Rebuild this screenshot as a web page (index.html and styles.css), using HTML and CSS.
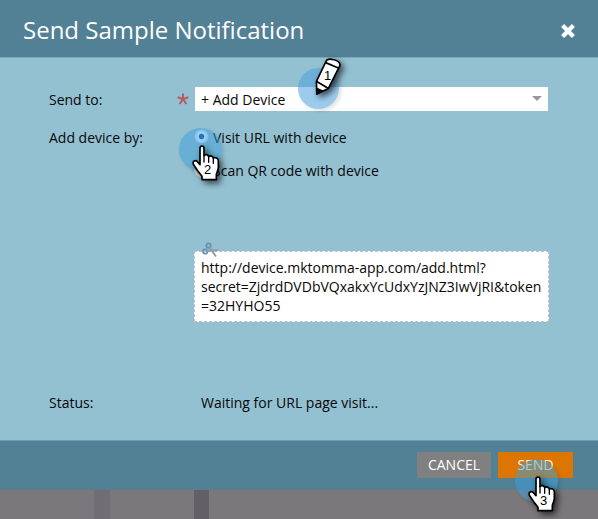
FILE: index.html
```html
<!DOCTYPE html>
<html lang="en">
<head>
<meta charset="utf-8">
<title>Send Sample Notification</title>
<link rel="stylesheet" href="styles.css">
</head>
<body>
<svg class="defs" width="0" height="0" aria-hidden="true">
  <symbol id="hand" viewBox="0 0 84 106">
    <path d="M24 58V9c0-9 12-9 12 0v22c3-5 13-4 14 3 4-4 13-2 14 4 6-3 15 1 15 8v20c0 11-6 17-6 22v15H30V93L17 76 4 57c-3-10 6-14 12-8z" fill="#fff" stroke="#000" stroke-width="5" stroke-linejoin="round"/>
    <path d="M36 30v20M50 35v16M64 39v15" stroke="#000" stroke-width="4" stroke-linecap="round"/>
  </symbol>
</svg>
<section class="dialog">
  <header class="header">
    <h1>Send Sample Notification</h1>
    <svg class="close" viewBox="0 0 14 14"><path d="M1.6 1.6l10.8 10.8M12.4 1.6L1.6 12.4" stroke="#fff" stroke-width="4.2"/></svg>
  </header>
  <main class="content">
    <div class="row device">
      <span class="label">Send to:</span>
      <svg class="required" viewBox="0 0 12 12"><path d="M6 6V.5M6 6L.7 4.3M6 6l5.3-1.7M6 6l-3.3 5M6 6l3.3 5" stroke="#b95a5f" stroke-width="2"/></svg>
      <div class="select"><span>+ Add Device</span><i class="arrow"></i></div>
    </div>
    <div class="row method">
      <span class="label">Add device by:</span>
      <div class="options">
        <div class="option"><i class="radio checked"></i><span>Visit URL with device</span></div>
        <div class="option"><i class="radio"></i><span>Scan QR code with device</span></div>
      </div>
    </div>
    <div class="coupon">
      <svg class="scissors" viewBox="0 0 18 16"><g fill="none" stroke="#6b8fae" stroke-width="1.8"><circle cx="6.5" cy="3.6" r="2.2"/><circle cx="3.2" cy="9.5" r="2.2"/></g><path d="M7.5 5.5L14 14.5M5.2 9L16.5 8" stroke="#8f9ea8" stroke-width="2"/></svg>
      <div>http://device.mktomma-app.com/add.html?</div>
      <div>secret=ZjdrdDVDbVQxakxYcUdxYzJNZ3IwVjRI&amp;token</div>
      <div>=32HYHO55</div>
    </div>
    <div class="row status"><span class="label">Status:</span><span>Waiting for URL page visit...</span></div>
  </main>
  <footer class="footer">
    <button class="cancel">CANCEL</button>
    <button class="send">SEND</button>
  </footer>
</section>
<div class="backdrop"><i class="bar light"></i><i class="bar dark"></i></div>

<div class="marker first"><i class="halo"></i>
  <svg class="pencil" viewBox="0 0 78 112"><g fill="#fff" stroke="#000" stroke-width="5" stroke-linejoin="round"><path d="M4 71L33 10C38-3 78 6 75 23L40 92 5 109z"/><path d="M32 14L72 31M5 71L38 91" fill="none"/><path d="M5 92v17l17-9z" fill="#000"/></g></svg>
  <b>1</b></div>
<div class="marker second"><i class="halo"></i><svg class="hand"><use href="#hand"/></svg><b>2</b></div>
<div class="marker third"><i class="halo"></i><svg class="hand"><use href="#hand"/></svg><b>3</b></div>
</body>
</html>
```
FILE: styles.css
```css
* { box-sizing: border-box; }
body { margin: 0; width: 598px; height: 519px; overflow: hidden; position: relative; font: 14px/19px "Open Sans", sans-serif; color: #080808; background: #7b787c; }
.defs { position: absolute; }
.dialog { height: 490px; display: flex; flex-direction: column; background: #94c1d2; }
.header { height: 58px; padding: 4px 23px 0; display: flex; align-items: center; justify-content: space-between; background: #528094; border-bottom: 1px solid #78a8bf; }
h1 { margin: 0 0 2px; color: #fff; font-size: 24px; font-weight: 400; line-height: 34px; }
.close { width: 14px; height: 14px; }
.content { flex: 1; padding: 29px 49px 0; }
.row { display: flex; }
.label { width: 152px; flex: none; }
.device { height: 24px; align-items: center; }
.device .label { width: 128px; }
.required { width: 12px; height: 12px; margin-right: 6px; }
.select { width: 353px; height: 24px; padding: 0 6px; display: flex; align-items: center; justify-content: space-between; background: #fff; }
.arrow { margin-bottom: 2px; border: 5px solid transparent; border-top-color: #999; border-bottom: 0; }
.method { margin-top: 17px; height: 123px; }
.method .label { width: 145px; }
.option { height: 33px; display: flex; align-items: flex-start; }
.radio { width: 15px; height: 15px; margin: 1px 4px 0 0; border-radius: 50%; background: #ddd; }
.checked { background: radial-gradient(circle, #004fb0 0 2.2px, #fff 3.2px 5px, #d5e8fc 6px, #8cbdf0 7.5px); }
.coupon { position: relative; width: 355px; height: 71px; margin-left: 145px; padding: 6px 6px; background: #fff; border: 1px dashed #bcc4c4; white-space: nowrap; }
.scissors { position: absolute; left: 7px; top: -10px; width: 18px; height: 16px; }
.status { margin-top: 71px; }
.footer { height: 50px; padding: 11px 25px; display: flex; justify-content: flex-end; gap: 7px; background: #528094; border-top: 1px solid #6e9db0; }
button { height: 26px; padding: 0; border: 0; color: #fff; font: 14px/26px "Open Sans", sans-serif; }
.cancel { width: 74px; background: #808080; }
.send { width: 75px; background: #dd7600; }
.backdrop { height: 29px; display: flex; }
.bar.light { width: 16px; margin-left: 94px; background: #716e73; }
.bar.dark { width: 15px; margin-left: 84px; background: #636065; }
.marker { position: absolute; width: 60px; height: 60px; }
.first { left: 298px; top: 57px; }
.second { left: 179px; top: 128px; }
.third { left: 515px; top: 459px; }
.halo { position: absolute; left: 0; top: 0; width: 43px; height: 43px; border-radius: 50%; background: rgba(57,157,215,.5); box-shadow: 2px 2px 4px rgba(0,0,0,.12); }
.first .halo { top: 11px; width: 41px; height: 41px; background: rgba(76,161,220,.55); }
.hand { position: absolute; left: 13px; top: 17px; width: 28px; height: 36px; overflow: visible; filter: drop-shadow(3px 3px 3px rgba(0,0,0,.65)); }
.pencil { position: absolute; left: 17px; top: 1px; width: 26px; height: 37px; overflow: visible; filter: drop-shadow(3px 3px 3px rgba(0,0,0,.65)); }
b { position: absolute; left: 25px; top: 35px; color: #000; font: 13px/14px "Liberation Sans", Arial, sans-serif; }
.first b { left: 26px; top: 12px; }
```
